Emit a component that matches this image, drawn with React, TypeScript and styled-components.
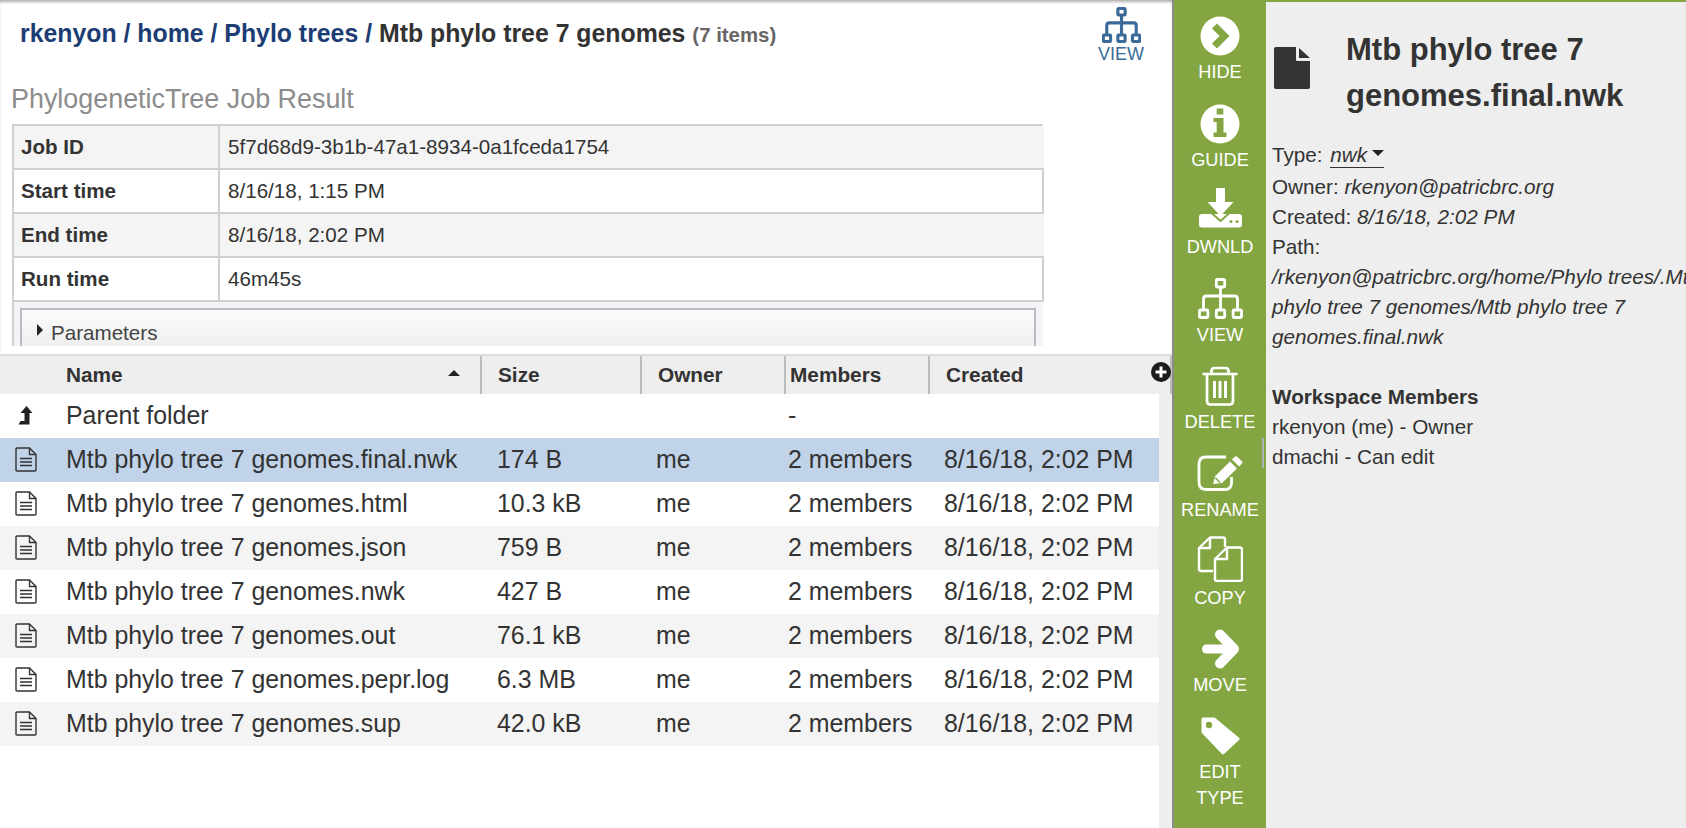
import React from 'react';
import styled, { createGlobalStyle, css } from 'styled-components';

const GlobalStyle = createGlobalStyle`
  html, body {
    margin: 0;
    padding: 0;
    height: 100%;
    overflow: hidden;
    background: #fff;
  }
  body {
    font-family: "Liberation Sans", Arial, sans-serif;
    color: #333;
  }
`;

const GREEN = '#83a643';

const Page = styled.div`
  display: flex;
  width: 1686px;
  height: 828px;
  overflow: hidden;
`;

const Main = styled.div`
  position: relative;
  width: 1172px;
  flex: none;
  display: flex;
  flex-direction: column;
  overflow: hidden;
  box-shadow: inset 0 3px 3px -1px #b0b0b0;
`;

const JobPane = styled.div`
  height: 346px;
  margin-bottom: 8px;
  flex: none;
  overflow: hidden;
`;

const TopBar = styled.div`
  height: 80px;
  display: flex;
  justify-content: space-between;
  align-items: flex-start;
  padding: 0 26px 0 20px;
  box-sizing: border-box;
`;

const Breadcrumb = styled.div`
  margin-top: 19px;
  font-size: 24.85px;
  line-height: 30px;
  font-weight: 700;
  color: #333;
`;

const Crumb = styled.span`
  color: #1c3d73;
`;

const ItemCount = styled.span`
  font-size: 20.4px;
  color: #666;
`;

const ViewAction = styled.div`
  width: 50px;
  padding-top: 7px;
  display: flex;
  flex-direction: column;
  align-items: center;
  color: #3a6b98;
  font-size: 18px;
  line-height: 22px;
`;

const JobTitle = styled.div`
  height: 44px;
  padding: 0 0 0 11px;
  font-size: 26.9px;
  line-height: 38px;
  color: #8c8c8c;
`;

const JobTable = styled.table`
  margin-left: 12px;
  width: 1032px;
  border-collapse: collapse;
  table-layout: fixed;
  font-size: 20.6px;
`;

const JobRow = styled.tr<{ $shaded?: boolean }>`
  height: 44px;
  background: ${({ $shaded }) => ($shaded ? '#f4f4f4' : '#fff')};
`;

const JobLabel = styled.td`
  width: 197px;
  padding: 0 0 0 7px;
  border: 2px solid #d0d0d0;
  font-weight: 700;
`;

const JobValue = styled.td<{ $open?: boolean }>`
  padding: 0 0 0 8px;
  border: 2px solid #d0d0d0;
  border-right-color: ${({ $open }) => ($open ? '#f4f4f4' : '#d0d0d0')};
`;

const ParamsCell = styled.td`
  padding: 6px 7px 0 6px;
  border-left: 2px solid #d0d0d0;
  background: #f4f4f4;
`;

const ParamsBox = styled.div`
  height: 60px;
  box-sizing: border-box;
  border: 2px solid #b6bdc9;
  background: linear-gradient(#fbfbfb, #eeeeee 40px);
  padding: 11px 0 0 15px;
  display: flex;
  align-items: flex-start;
  gap: 8px;
  font-size: 20.6px;
  line-height: 24px;
  color: #444;
`;

const ParamsCaret = styled.span`
  margin-top: 3px;
  width: 0;
  height: 0;
  border-left: 6px solid #222;
  border-top: 6px solid transparent;
  border-bottom: 6px solid transparent;
`;

const columnGrid = css`
  display: grid;
  grid-template-columns: 482px 160px 144px 144px 1fr;
`;

const GridHeader = styled.div`
  ${columnGrid};
  flex: none;
  height: 40px;
  box-sizing: border-box;
  border-top: 2px solid #dcdcdc;
  background: #eeeeee;
  font-size: 20.8px;
  font-weight: 700;
`;

const HeadCell = styled.div<{ $pad: number }>`
  display: flex;
  align-items: center;
  justify-content: space-between;
  padding-left: ${({ $pad }) => $pad}px;
  padding-right: 20px;
  border-right: 2px solid #bcbcbc;
  box-sizing: border-box;
  line-height: 38px;
`;

const SortMark = styled.span`
  width: 0;
  height: 0;
  margin-bottom: 5px;
  border-left: 6px solid transparent;
  border-right: 6px solid transparent;
  border-bottom: 6px solid #222;
`;

const AddColumn = styled.div`
  position: absolute;
  left: 1151px;
  top: 362px;
  width: 20px;
  height: 20px;
  border-radius: 50%;
  background: #1c1c1c;
  display: flex;
  align-items: center;
  justify-content: center;
  color: #fff;
`;

const GridBody = styled.div`
  flex: 1;
  background: #eeeeee;
`;

const Rows = styled.div`
  width: 1159px;
  height: 100%;
  background: #fff;
`;

const Row = styled.div<{ $bg: string }>`
  ${columnGrid};
  height: 44px;
  padding-bottom: 1px;
  box-sizing: border-box;
  align-items: center;
  font-size: 24.9px;
  color: #333;
  background: ${({ $bg }) => $bg};
`;

const NameCell = styled.div`
  display: flex;
  align-items: center;
  white-space: nowrap;
`;

const RowIcon = styled.span`
  width: 66px;
  flex: none;
  display: flex;
  padding-left: 15px;
  box-sizing: border-box;
`;

const ParentIcon = styled.span`
  width: 66px;
  flex: none;
  display: flex;
  padding-left: 18px;
  box-sizing: border-box;
`;

const Cell = styled.div<{ $pad: number }>`
  padding-left: ${({ $pad }) => $pad}px;
  white-space: nowrap;
`;

const Sidebar = styled.div`
  position: relative;
  flex: none;
  width: 92px;
  margin-left: 2px;
  box-shadow: -2px 0 0 #8d8d8d;
  background: ${GREEN};
  padding-top: 6px;
  box-sizing: border-box;
  display: flex;
  flex-direction: column;
  align-items: center;
  color: #fff;
`;

const SideAction = styled.div`
  width: 100%;
  height: 87.6px;
  flex: none;
  display: flex;
  flex-direction: column;
  align-items: center;
  font-size: 18.2px;
  line-height: 26px;
  text-align: center;
`;

const IconSlot = styled.div<{ $lift: number; $gap: number }>`
  height: 50px;
  flex: none;
  display: flex;
  align-items: flex-end;
  padding-bottom: ${({ $lift }) => $lift}px;
  margin-bottom: ${({ $gap }) => $gap}px;
  box-sizing: border-box;
`;

const SplitGrip = styled.div`
  position: absolute;
  left: 88px;
  top: 438px;
  width: 2px;
  height: 30px;
  background: #aab2bb;
`;

const Panel = styled.div`
  flex: none;
  width: 420px;
  background: #eeeeee;
  box-shadow: inset 0 2px 0 ${GREEN};
  overflow: hidden;
  box-sizing: border-box;
  padding: 27px 0 0 6px;
`;

const PanelHead = styled.div`
  display: flex;
  align-items: flex-start;
  margin-bottom: 21px;
`;

const PanelIcon = styled.div`
  width: 74px;
  padding: 20px 0 0 2px;
  box-sizing: border-box;
  flex: none;
  color: #333;
`;

const PanelTitle = styled.div`
  width: 340px;
  font-size: 31px;
  line-height: 46px;
  font-weight: 700;
  color: #333;
`;

const Details = styled.div`
  width: 440px;
  font-size: 20.7px;
  line-height: 30px;
  color: #333;
`;

const TypeLine = styled.div`
  height: 32px;
`;

const TypeValue = styled.span`
  display: inline-flex;
  align-items: center;
  gap: 5px;
  height: 23px;
  margin-left: 2px;
  border-bottom: 1.5px solid #333;
  font-style: italic;
`;

const TypeCaret = styled.span`
  width: 0;
  height: 0;
  border-left: 6px solid transparent;
  border-right: 6px solid transparent;
  border-top: 6px solid #222;
  margin-bottom: 4px;
`;

const Value = styled.span`
  font-style: italic;
`;

const PathValue = styled.div`
  font-style: italic;
`;

const MembersTitle = styled.div`
  margin-top: 30px;
  font-weight: 700;
`;

const HideIcon = () => (
  <svg width="40" height="40" viewBox="0 0 40 40">
    <circle cx="20" cy="20" r="19.5" fill="#fff" />
    <path d="M14.5 10 L24.5 20 L14.5 30" fill="none" stroke={GREEN} strokeWidth="7" />
  </svg>
);

const GuideIcon = () => (
  <svg width="40" height="40" viewBox="0 0 40 40">
    <circle cx="20" cy="20" r="19.5" fill="#fff" />
    <rect x="16.7" y="4.5" width="6.6" height="6" fill={GREEN} />
    <path d="M13.5 14 H23.5 V28.5 H26.5 V33 H13.5 V28.5 H16.7 V18 H13.5 Z" fill={GREEN} />
  </svg>
);

const DownloadIcon = () => (
  <svg width="43" height="40" viewBox="0 0 43 40">
    <rect x="0" y="26" width="43" height="13.5" rx="3" fill="#fff" />
    <path d="M8 21 L21.5 33 L35 21" fill="none" stroke={GREEN} strokeWidth="2" />
    <path d="M17 0 H26 V14 H34.5 L21.5 28 L8.5 14 H17 Z" fill="#fff" />
    <circle cx="32" cy="33.5" r="1.5" fill={GREEN} />
    <circle cx="38" cy="33.5" r="1.5" fill={GREEN} />
  </svg>
);

const TreeIcon = ({ width, height, weight }: { width: number; height: number; weight: number }) => (
  <svg width={width} height={height} viewBox="0 0 45 41" fill="none" stroke="currentColor" strokeWidth={weight}>
    <rect x="18.3" y="1.5" width="8.4" height="7.5" rx="1" />
    <path d="M22.5 9 V31.5" />
    <path d="M5.5 31.5 V21 Q5.5 18 8.5 18 H36.5 Q39.5 18 39.5 21 V31.5" />
    <rect x="1.5" y="32" width="8.4" height="7.5" rx="1" />
    <rect x="18.3" y="32" width="8.4" height="7.5" rx="1" />
    <rect x="35.1" y="32" width="8.4" height="7.5" rx="1" />
  </svg>
);

const TrashIcon = () => (
  <svg width="36" height="40" viewBox="0 0 36 40" fill="none" stroke="#fff" strokeWidth="2.7">
    <path d="M0.5 8 H35.5" />
    <path d="M9.5 7 V5 Q9.5 2 12.5 2 H23.5 Q26.5 2 26.5 5 V7" />
    <path d="M5 9 V35 Q5 38.5 8.5 38.5 H27.5 Q31 38.5 31 35 V9" />
    <rect x="11" y="15" width="3" height="17" fill="#fff" stroke="none" />
    <rect x="16.5" y="15" width="3" height="17" fill="#fff" stroke="none" />
    <rect x="22" y="15" width="3" height="17" fill="#fff" stroke="none" />
  </svg>
);

const RenameIcon = () => (
  <svg width="46" height="37" viewBox="0 0 46 37">
    <path d="M29 2 H9 Q2 2 2 9 V27 Q2 34.5 9 34.5 H28 Q34.5 34.5 34.5 28 V22" fill="none" stroke="#fff" strokeWidth="2.8" />
    <path d="M16 29 L18.3 21 L33 6.5 L40 13.5 L25 28 Z" fill="#fff" />
    <path d="M18.5 23 L23 27.5" stroke={GREEN} strokeWidth="1.6" />
    <path d="M35 4.5 L38 1.5 Q39 0.8 40 1.5 L45 6.5 Q45.6 7.5 45 8.5 L42 11.5 Z" fill="#fff" />
  </svg>
);

const CopyIcon = () => (
  <svg width="46" height="46" viewBox="0 0 46 46" fill="none" stroke="#fff" strokeWidth="2.4" strokeLinejoin="round">
    <path d="M16 35 H4 Q2 35 2 33 V12 L13 1.5 H26 Q28 1.5 28 3.5 V11" />
    <path d="M13 2 V12 H3" />
    <path d="M30 11.5 H43 Q45 11.5 45 13.5 V43 Q45 45 43 45 H20 Q18 45 18 43 V23 Z" />
    <path d="M30 12 V23 H18.5" />
  </svg>
);

const MoveIcon = () => (
  <svg width="37" height="40" viewBox="0 0 37 40" fill="none" stroke="#fff" strokeLinecap="round" strokeLinejoin="round">
    <path d="M4.5 20 H28" strokeWidth="9" />
    <path d="M18 5.5 L32 20 L18 34.5" strokeWidth="10" />
  </svg>
);

const TagIcon = () => (
  <svg width="39" height="38" viewBox="0 0 39 38">
    <path d="M2 2 H13 L37 22 L22 36 L2 15 Z" fill="#fff" stroke="#fff" strokeWidth="3" strokeLinejoin="round" />
    <circle cx="8" cy="8" r="3.2" fill={GREEN} />
  </svg>
);

const DocFilledIcon = () => (
  <svg width="36" height="42" viewBox="0 0 36 42" fill="currentColor">
    <path d="M2 0 H22 V13 Q22 14 23 14 H36 V40 Q36 42 34 42 H2 Q0 42 0 40 V2 Q0 0 2 0 Z" />
    <path d="M25 1 L36 11 H25 Z" />
  </svg>
);

const DocLineIcon = () => (
  <svg width="22" height="25" viewBox="0 0 22 25" fill="none" stroke="#333" strokeWidth="1.4">
    <path d="M1 2 Q1 1 2 1 H14.5 L21 7.5 V23 Q21 24 20 24 H2 Q1 24 1 23 Z" />
    <path d="M14.5 1 V7.5 H21" />
    <path d="M5 11.5 H17 M5 15 H17 M5 18.5 H17" />
  </svg>
);

const ParentFolderIcon = () => (
  <svg width="15" height="19" viewBox="0 0 14 19">
    <path d="M8 0 L14 7 H11 V18.5 H0 L2 15 H6 V7 H2 Z" fill="#222" />
  </svg>
);

const PlusGlyph = () => (
  <svg width="12" height="12" viewBox="0 0 12 12">
    <path d="M4.5 0.5 H7.5 V4.5 H11.5 V7.5 H7.5 V11.5 H4.5 V7.5 H0.5 V4.5 H4.5 Z" fill="currentColor" />
  </svg>
);

const jobRows = [
  { label: 'Job ID', value: '5f7d68d9-3b1b-47a1-8934-0a1fceda1754', shaded: true },
  { label: 'Start time', value: '8/16/18, 1:15 PM', shaded: false },
  { label: 'End time', value: '8/16/18, 2:02 PM', shaded: true },
  { label: 'Run time', value: '46m45s', shaded: false },
];

const files = [
  { name: 'Mtb phylo tree 7 genomes.final.nwk', size: '174 B', bg: '#c0d3e8' },
  { name: 'Mtb phylo tree 7 genomes.html', size: '10.3 kB', bg: '#fff' },
  { name: 'Mtb phylo tree 7 genomes.json', size: '759 B', bg: '#f4f4f4' },
  { name: 'Mtb phylo tree 7 genomes.nwk', size: '427 B', bg: '#fff' },
  { name: 'Mtb phylo tree 7 genomes.out', size: '76.1 kB', bg: '#f4f4f4' },
  { name: 'Mtb phylo tree 7 genomes.pepr.log', size: '6.3 MB', bg: '#fff' },
  { name: 'Mtb phylo tree 7 genomes.sup', size: '42.0 kB', bg: '#f4f4f4' },
];

const sideActions = [
  { label: ['HIDE'], icon: <HideIcon />, lift: 0, gap: 3 },
  { label: ['GUIDE'], icon: <GuideIcon />, lift: 0, gap: 3 },
  { label: ['DWNLD'], icon: <DownloadIcon />, lift: 3, gap: 3 },
  { label: ['VIEW'], icon: <TreeIcon width={45} height={41} weight={2.8} />, lift: 0, gap: 3 },
  { label: ['DELETE'], icon: <TrashIcon />, lift: 0, gap: 3 },
  { label: ['RENAME'], icon: <RenameIcon />, lift: 2, gap: 3 },
  { label: ['COPY'], icon: <CopyIcon />, lift: 0, gap: 3 },
  { label: ['MOVE'], icon: <MoveIcon />, lift: 0, gap: 3 },
  { label: ['EDIT', 'TYPE'], icon: <TagIcon />, lift: 2, gap: 2 },
];

export default function App() {
  return (
    <Page>
      <GlobalStyle />
      <Main>
        <JobPane>
          <TopBar>
            <Breadcrumb>
              <Crumb>rkenyon / home / Phylo trees / </Crumb>
              Mtb phylo tree 7 genomes <ItemCount>(7 items)</ItemCount>
            </Breadcrumb>
            <ViewAction>
              <TreeIcon width={39} height={36} weight={3.6} />
              VIEW
            </ViewAction>
          </TopBar>
          <JobTitle>PhylogeneticTree Job Result</JobTitle>
          <JobTable>
            <tbody>
              {jobRows.map((row) => (
                <JobRow key={row.label} $shaded={row.shaded}>
                  <JobLabel>{row.label}</JobLabel>
                  <JobValue $open={row.shaded}>{row.value}</JobValue>
                </JobRow>
              ))}
              <tr>
                <ParamsCell colSpan={2}>
                  <ParamsBox>
                    <ParamsCaret />
                    Parameters
                  </ParamsBox>
                </ParamsCell>
              </tr>
            </tbody>
          </JobTable>
        </JobPane>
        <GridHeader>
          <HeadCell $pad={66}>
            Name
            <SortMark />
          </HeadCell>
          <HeadCell $pad={16}>Size</HeadCell>
          <HeadCell $pad={16}>Owner</HeadCell>
          <HeadCell $pad={4}>Members</HeadCell>
          <HeadCell $pad={16}>Created</HeadCell>
        </GridHeader>
        <AddColumn>
          <PlusGlyph />
        </AddColumn>
        <GridBody>
          <Rows>
            <Row $bg="#fff">
              <NameCell>
                <ParentIcon>
                  <ParentFolderIcon />
                </ParentIcon>
                Parent folder
              </NameCell>
              <Cell $pad={15} />
              <Cell $pad={14} />
              <Cell $pad={2}>-</Cell>
              <Cell $pad={14} />
            </Row>
            {files.map((file) => (
              <Row key={file.name} $bg={file.bg}>
                <NameCell>
                  <RowIcon>
                    <DocLineIcon />
                  </RowIcon>
                  {file.name}
                </NameCell>
                <Cell $pad={15}>{file.size}</Cell>
                <Cell $pad={14}>me</Cell>
                <Cell $pad={2}>2 members</Cell>
                <Cell $pad={14}>8/16/18, 2:02 PM</Cell>
              </Row>
            ))}
          </Rows>
        </GridBody>
      </Main>
      <Sidebar>
        {sideActions.map((action) => (
          <SideAction key={action.label[0]}>
            <IconSlot $lift={action.lift} $gap={action.gap}>
              {action.icon}
            </IconSlot>
            {action.label.map((line) => (
              <div key={line}>{line}</div>
            ))}
          </SideAction>
        ))}
        <SplitGrip />
      </Sidebar>
      <Panel>
        <PanelHead>
          <PanelIcon>
            <DocFilledIcon />
          </PanelIcon>
          <PanelTitle>Mtb phylo tree 7 genomes.final.nwk</PanelTitle>
        </PanelHead>
        <Details>
          <TypeLine>
            Type:{' '}
            <TypeValue>
              nwk
              <TypeCaret />
            </TypeValue>
          </TypeLine>
          <div>
            Owner: <Value>rkenyon@patricbrc.org</Value>
          </div>
          <div>
            Created: <Value>8/16/18, 2:02 PM</Value>
          </div>
          <div>Path:</div>
          <PathValue>/rkenyon@patricbrc.org/home/Phylo trees/.Mtb phylo tree 7 genomes/Mtb phylo tree 7 genomes.final.nwk</PathValue>
          <MembersTitle>Workspace Members</MembersTitle>
          <div>rkenyon (me) - Owner</div>
          <div>dmachi - Can edit</div>
        </Details>
      </Panel>
    </Page>
  );
}
